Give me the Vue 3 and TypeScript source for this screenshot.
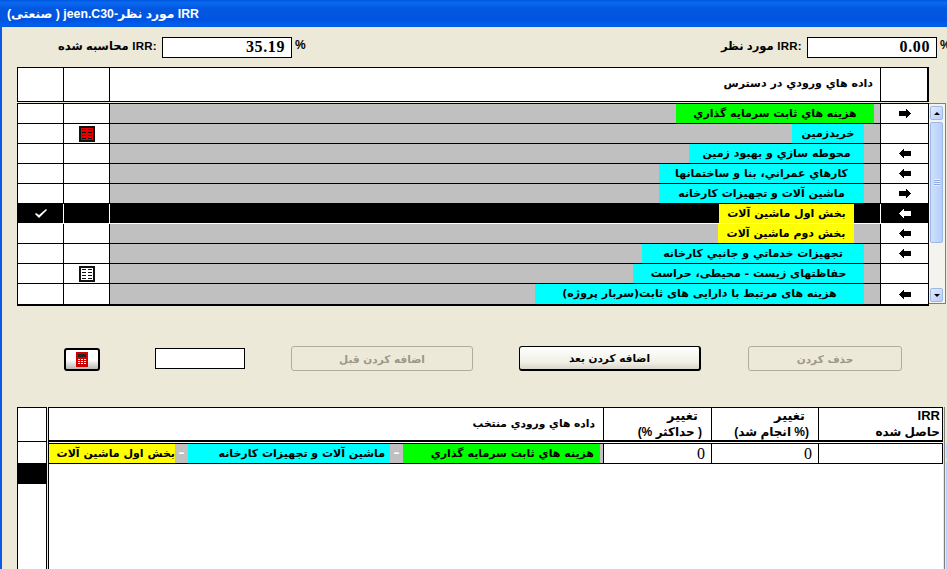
<script setup lang="ts">
interface Row {
  text: string
  color: string
  width: number
  inset: number
  arrow: '' | 'left' | 'right'
  icon: '' | 'red' | 'plain'
  active?: boolean
}
const rows: Row[] = [
  { text: 'هزینه هاي ثابت سرمایه گذاري', color: '#00ff00', width: 198, inset: 6, arrow: 'right', icon: '' },
  { text: 'خریدزمین', color: '#00ffff', width: 72, inset: 16, arrow: '', icon: 'red' },
  { text: 'محوطه سازي و بهبود زمین', color: '#00ffff', width: 175, inset: 16, arrow: 'left', icon: '' },
  { text: 'کارهاي عمراني، بنا و ساختمانها', color: '#00ffff', width: 205, inset: 16, arrow: 'left', icon: '' },
  { text: 'ماشین آلات و تجهیزات کارخانه', color: '#00ffff', width: 205, inset: 16, arrow: 'right', icon: '' },
  { text: 'بخش اول ماشین آلات', color: '#ffff00', width: 135, inset: 26, arrow: 'left', icon: '', active: true },
  { text: 'بخش دوم ماشین آلات', color: '#ffff00', width: 136, inset: 26, arrow: 'left', icon: '' },
  { text: 'تجهیزات خدماتي و جانبي کارخانه', color: '#00ffff', width: 222, inset: 16, arrow: 'left', icon: '' },
  { text: 'حفاظتهای زیست - محیطی، حراست', color: '#00ffff', width: 231, inset: 16, arrow: '', icon: 'plain' },
  { text: 'هزینه های مرتبط با دارایی های ثابت(سربار پروژه)', color: '#00ffff', width: 329, inset: 16, arrow: 'left', icon: '' },
]
const chain = [
  { text: 'بخش اول ماشین آلات', color: '#ffff00', width: 126, pad: 0 },
  { text: 'ماشین آلات و تجهیزات کارخانه', color: '#00ffff', width: 202, pad: 5 },
  { text: 'هزینه هاي ثابت سرمایه گذاري', color: '#00ff00', width: 197, pad: 6 },
]
</script>

<template>
  <div class="win">
    <div class="title" dir="rtl">IRR مورد نظر-jeen.C30 ( صنعتی)</div>
    <div class="body">
      <div class="irr">
        <span class="irr-label left-label" dir="rtl">:IRR محاسبه شده</span>
        <span class="irr-box">35.19</span>
        <span class="pct">%</span>
        <span class="irr-label right-label" dir="rtl">:IRR مورد نظر</span>
        <span class="irr-box">0.00</span>
        <span class="pct">%</span>
      </div>

      <div class="head cols">
        <div></div>
        <div></div>
        <div class="head-text" dir="rtl">داده هاي ورودي در دسترس</div>
        <div></div>
      </div>

      <div class="list-wrap">
        <div class="list">
          <div v-for="row in rows" :key="row.text" class="row cols" :class="{ active: row.active }">
            <div class="cell center">
              <svg v-if="row.active" width="14" height="11" viewBox="0 0 14 11"><path d="M1 6l1-1 3 2 7-6 1 1-8 8z" fill="#fff" /></svg>
            </div>
            <div class="cell center">
              <svg v-if="row.icon" class="table-icon" width="16" height="16" viewBox="0 0 16 16" shape-rendering="crispEdges">
                <rect width="16" height="16" fill="#111" />
                <rect x="2" y="2" width="12" height="12" :fill="row.icon === 'red' ? '#e60000' : '#fff'" />
                <path d="M3 3.5h4M9 3.5h4M3 6.5h4M9 6.5h4M3 9.5h4M9 9.5h4M3 12.5h4M9 12.5h4" stroke="#111" stroke-width="1" />
              </svg>
            </div>
            <div class="tag-cell" :style="{ paddingRight: row.inset + 'px' }">
              <div class="tag" dir="rtl" :style="{ background: row.color, width: row.width + 'px' }">{{ row.text }}</div>
            </div>
            <div class="cell center">
              <svg v-if="row.arrow" width="12" height="9" viewBox="0 0 12 9" :class="{ flip: row.arrow === 'left' }" shape-rendering="crispEdges">
                <path d="M0 2h7V0h1v1h1v1h1v1h1v1h1v1h-1v1h-1v1H9v1H8v1H7V7H0z" :fill="row.active ? '#fff' : '#000'" />
              </svg>
            </div>
          </div>
        </div>
        <div class="scroll">
          <div class="sb-btn"><span class="up"></span></div>
          <div class="sb-thumb"><span class="grip"></span></div>
          <div class="sb-btn down-btn"><span class="down"></span></div>
        </div>
      </div>

      <div class="actions">
        <button class="calc" type="button">
          <svg width="12" height="15" viewBox="0 0 12 15" shape-rendering="crispEdges">
            <rect width="12" height="15" rx="1" fill="#d00000" />
            <rect x="2" y="2" width="8" height="3" fill="#222" />
            <path d="M2 7h2M5 7h2M8 7h2M2 9h2M5 9h2M8 9h2M2 11h2M5 11h2M8 11h2" stroke="#fff" stroke-width="1" />
          </svg>
        </button>
        <span class="small-box"></span>
        <button class="btn off first" type="button" dir="rtl">اضافه کردن قبل</button>
        <button class="btn on" type="button" dir="rtl">اضافه کردن بعد</button>
        <button class="btn off last" type="button" dir="rtl">حذف کردن</button>
      </div>

      <div class="sel">
        <div class="sel-side">
          <div class="side-head"></div>
          <div class="side-row"></div>
          <div class="side-black"></div>
        </div>
        <div class="sel-main">
          <div class="sel-head sel-cols">
            <div class="sh sh-main" dir="rtl">داده هاي ورودي منتخب</div>
            <div class="sh sh-two" dir="rtl"><span class="change">تغییر</span><span>( حداکثر %)</span></div>
            <div class="sh sh-two" dir="rtl"><span class="change">تغییر</span><span>(% انجام شد)</span></div>
            <div class="sh sh-two sh-last" dir="rtl"><span class="ltr-irr">IRR</span><span>حاصل شده</span></div>
          </div>
          <div class="sel-row sel-cols">
            <div class="chain">
              <template v-for="(c, i) in chain" :key="c.text">
                <div class="chain-tag" dir="rtl" :style="{ background: c.color, width: c.width + 'px', paddingRight: c.pad + 'px' }">{{ c.text }}</div>
                <div class="dash" :class="{ tail: i === 2 }"><span v-if="i < 2">–</span></div>
              </template>
            </div>
            <div class="num">0</div>
            <div class="num">0</div>
            <div class="num"></div>
          </div>
        </div>
        <div class="sel-scroll">
          <div class="ss-btn"></div>
          <div class="ss-thumb"></div>
        </div>
      </div>
    </div>
  </div>
</template>

<style>
html, body { margin: 0; overflow: hidden; }
</style>

<style scoped>
.win {
  width: 947px;
  height: 569px;
  overflow: hidden;
  display: flex;
  flex-direction: column;
  font-family: "DejaVu Sans", sans-serif;
  font-weight: 700;
  color: #000;
}
.title {
  height: 27px;
  flex: none;
  box-sizing: border-box;
  padding: 6px 0 0 7px;
  background: linear-gradient(#0058e0 0, #0a6af0 3px, #0358e2 8px, #0053de 20px, #0060ee 25px, #0058d8 27px);
  color: #fff;
  font-family: "Liberation Sans", "DejaVu Sans", sans-serif;
  font-size: 12.3px;
  line-height: 16px;
  text-align: left;
}
.body {
  flex: 1;
  min-height: 0;
  box-sizing: border-box;
  background: #ece9d8;
  border-left: 2px solid #0a5ae6;
  padding: 10px 0 0 15px;
}
.irr {
  display: flex;
  height: 21px;
  align-items: stretch;
  margin-bottom: 9px;
}
.irr > span { flex: none; }
.irr-label { text-align: right; line-height: 19px; white-space: nowrap; font-family: "Liberation Sans", "DejaVu Sans", sans-serif; font-size: 11.5px; letter-spacing: .3px; }
.left-label { width: 140px; margin-right: 5px; }
.right-label { width: 496px; margin-right: 5px; }
.irr-box {
  width: 130px;
  box-sizing: border-box;
  border: 1px solid #000;
  background: #fff;
  text-align: right;
  padding-right: 6px;
  font: 700 16px/18px "Liberation Serif", serif;
  letter-spacing: .6px;
}
.pct { width: 14px; padding-left: 3px; box-sizing: border-box; font: 700 12px/16px "Liberation Sans", sans-serif; }
.cols { display: grid; }
.head {
  width: 912px;
  box-sizing: border-box;
  height: 35px;
  background: #fff;
  border: 1px solid #000;
  border-right-width: 2px;
  grid-template-columns: 46px 46px 771px 46px;
}
.head > div { border-right: 1px solid #000; }
.head > div:last-child { border-right: 0; }
.head-text { font-size: 11px; line-height: 32px; padding-right: 7px; text-align: right; white-space: nowrap; }
.list-wrap { display: flex; margin-top: 1px; height: 203px; }
.list {
  width: 912px;
  flex: none;
  box-sizing: border-box;
  border-top: 1px solid #000;
  border-left: 1px solid #000;
  border-right: 1px solid #000;
  border-bottom: 2px solid #000;
  height: 203px;
  background: #fff;
}
.row { height: 20px; box-sizing: border-box; border-bottom: 1px solid #000; grid-template-columns: 46px 46px 771px 47px; }
.row:last-child { border-bottom: 0; }
.cell { border-right: 1px solid #000; }
.cell:last-child { border-right: 0; }
.center { display: flex; align-items: center; justify-content: center; }
.tag-cell {
  background: #c0c0c0;
  display: flex;
  justify-content: flex-end;
  box-sizing: border-box;
  border-right: 1px solid #000;
  overflow: hidden;
}
.tag {
  flex: none;
  box-sizing: border-box;
  font-size: 11px;
  line-height: 19px;
  text-align: center;
  white-space: nowrap;
  overflow: hidden;
}
.row.active { background: #000; border-bottom-color: #fff; }
.row.active .cell { border-right-color: #fff; }
.row.active .tag-cell { background: #000; border-right-color: #fff; }
.flip { transform: scaleX(-1); }
.scroll {
  width: 17px;
  height: 201px;
  flex: none;
  box-sizing: border-box;
  padding: 2px 2px 1px 1px;
  background: #f4f3ee;
  display: flex;
  flex-direction: column;
  border: 1px solid #808078;
  border-left: 0;
}
.sb-btn {
  height: 14px;
  flex: none;
  border: 1px solid #9db9e8;
  border-radius: 2px;
  box-sizing: border-box;
  background: linear-gradient(135deg, #e2ecfd, #b7cdf8);
  display: flex;
  align-items: center;
  justify-content: center;
}
.down-btn { margin-top: auto; }
.up, .down { width: 0; height: 0; border-left: 3px solid transparent; border-right: 3px solid transparent; }
.up { border-bottom: 3px solid #000; }
.down { border-top: 3px solid #000; }
.sb-thumb {
  margin-top: 2px;
  height: 121px;
  flex: none;
  box-sizing: border-box;
  border: 1px solid #9db9e8;
  border-radius: 2px;
  background: linear-gradient(90deg, #cfe0fc, #b5cdf9);
  display: flex;
  align-items: center;
  justify-content: center;
}
.grip { width: 6px; height: 7px; background: repeating-linear-gradient(#e8f0fe 0 1px, #8aa8de 1px 2px); }
.actions { display: flex; align-items: flex-start; height: 25px; margin-top: 40px; padding-left: 47px; }
.calc {
  width: 36px;
  height: 23px;
  margin-top: 2px;
  padding: 0;
  box-sizing: border-box;
  border: 2px solid #000;
  border-radius: 3px;
  background: linear-gradient(#fff 50%, #b8b8b0);
  display: flex;
  align-items: center;
  justify-content: center;
}
.small-box { width: 90px; height: 21px; margin: 2px 46px 0 55px; box-sizing: border-box; background: #fff; border: 1px solid #000; }
.btn {
  height: 25px;
  width: 182px;
  padding: 0;
  border-radius: 3px;
  font-family: "DejaVu Sans", sans-serif;
  font-weight: 700;
  font-size: 10.5px;
  background: #ece9d8;
  box-sizing: border-box;
}
.off { border: 1px solid #b0ad9c; color: #9a9888; }
.on { border: 1px solid #000; border-bottom-width: 2px; border-right-width: 2px; color: #000; background: linear-gradient(#fff, #f0efe6 70%, #d8d5c8); margin: 0 47px 0 46px; }
.last { width: 154px; }
.sel { display: flex; margin-top: 36px; height: 162px; align-items: stretch; }
.sel-side { width: 30px; box-sizing: border-box; border: 1px solid #000; border-bottom: 0; background: #fff; margin-right: 1px; flex: none; }
.side-head { height: 34px; border-bottom: 1px solid #000; box-sizing: border-box; }
.side-row { height: 20px; margin-top: 1px; }
.side-black { height: 21px; background: #000; }
.sel-main { width: 895px; flex: none; box-sizing: border-box; border: 1px solid #000; border-bottom: 0; border-right: 0; background: #fff; }
.sel-cols { display: grid; grid-template-columns: 554px 108px 107px 125px; }
.sel-head { height: 34px; box-sizing: border-box; border-bottom: 2px solid #000; }
.sh { border-left: 1px solid #000; line-height: 16px; padding-right: 9px; text-align: right; white-space: nowrap; font-family: "Liberation Sans", "DejaVu Sans", sans-serif; font-size: 12px; }
.sh-main { border-left: 0; line-height: 32px; font-family: "DejaVu Sans", sans-serif; font-size: 10.7px; padding-right: 8px; }
.sh-two { display: flex; flex-direction: column; }
.change { padding-right: 4px; font-size: 13px; }
.sh-last { border-right: 1px solid #000; padding-right: 2px; }
.ltr-irr { font-size: 13px; }
.sel-row { height: 21px; box-sizing: border-box; border-top: 1px solid #000; border-bottom: 1px solid #000; margin-top: 1px; }
.chain { display: flex; height: 19px; }
.chain-tag { font-size: 11px; line-height: 19px; box-sizing: border-box; text-align: right; white-space: nowrap; overflow: hidden; flex: none; }
.dash { width: 13px; background: #c0c0c0; color: #fff; font-size: 12px; line-height: 18px; text-align: center; flex: none; }
.dash.tail { width: 3px; }
.num { border-left: 1px solid #000; text-align: right; padding-right: 6px; font: 400 16px/19px "Liberation Serif", serif; }
.num:last-child { border-right: 1px solid #000; }
.sel-scroll {
  width: 3px;
  flex: none;
  margin-left: 1px;
  padding: 36px 0 0 1px;
  border-left: 1px solid #808078;
  display: flex;
  flex-direction: column;
  gap: 2px;
}
.ss-btn { height: 16px; flex: none; background: #c3d5fb; border-radius: 2px 0 0 2px; }
.ss-thumb { flex: 1; background: #bdd2fa; border-radius: 2px 0 0 0; }
</style>
